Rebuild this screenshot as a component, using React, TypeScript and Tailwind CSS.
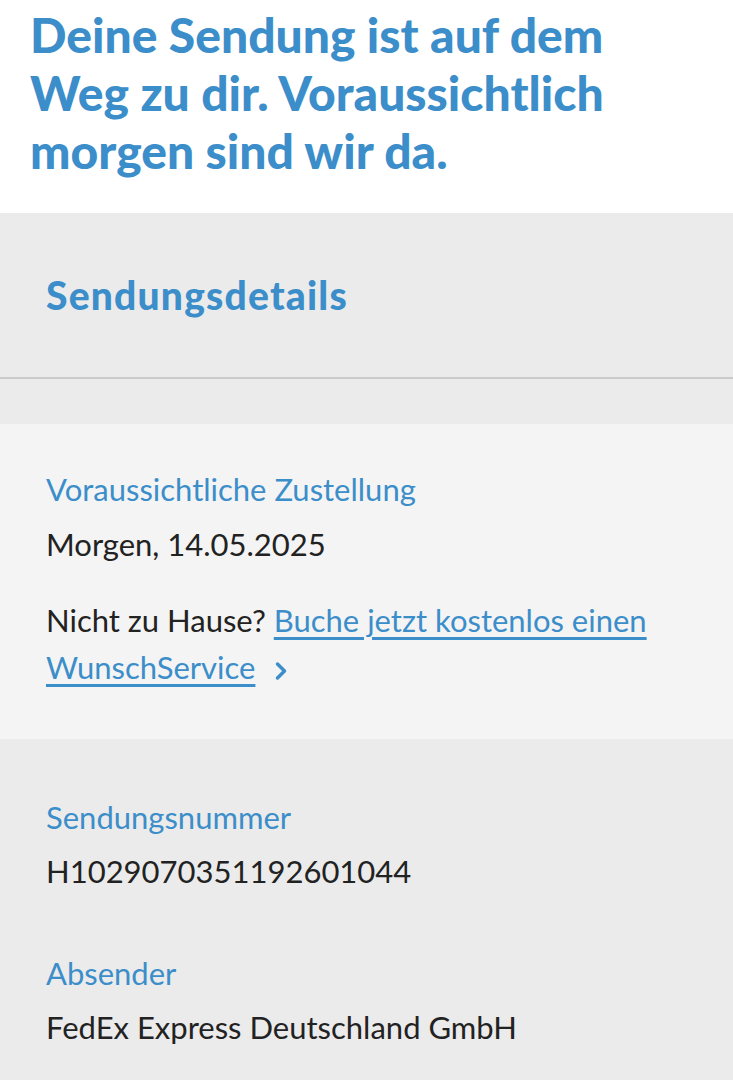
export default function App() {
  return (
    <div className="min-h-[1080px] w-full bg-[#ebebeb] font-['Lato','Liberation_Sans',sans-serif]">
      <div className="bg-white px-[30px] pt-[6px] pb-[33px]">
        <h1 className="text-[48px] font-black leading-[58px] tracking-[0px] text-[#3b8ec9]">
          Deine Sendung ist auf dem
          <br />
          Weg zu dir. Voraussichtlich
          <br />
          morgen sind wir da.
        </h1>
      </div>

      <div className="flex h-[166px] items-center border-b-2 border-[#cbcbcb] px-[46px]">
        <h2 className="text-[39px] font-black tracking-[1.2px] text-[#3b8ec9]">Sendungsdetails</h2>
      </div>

      <div className="h-[45px]" />

      <div className="bg-[#f4f4f4] px-[46px] pt-[45px] pb-[48px] text-[31px]">
        <p className="leading-[40px] text-[#3b8ec9]">Voraussichtliche Zustellung</p>
        <p className="mt-[15px] leading-[40px] text-[#222]">Morgen, 14.05.2025</p>
        <p className="mt-[33px] leading-[47px] text-[#222]">
          Nicht zu Hause?{" "}
          <a href="#" className="text-[#3b8ec9] underline decoration-[3px] underline-offset-[5px]">
            Buche jetzt kostenlos einen WunschService
          </a>
          <svg className="ml-[20px] inline-block align-[-2px]" width="12" height="20" viewBox="0 0 12 20" fill="none">
            <path d="M2.5 3l7 7-7 7" stroke="#3b8ec9" strokeWidth="3.5" strokeLinecap="round" strokeLinejoin="round" />
          </svg>
        </p>
      </div>

      <div className="px-[46px] pt-[58px] pb-[40px] text-[31px]">
        <p className="leading-[40px] text-[#3b8ec9]">Sendungsnummer</p>
        <p className="mt-[14px] leading-[40px] text-[#222]">H1029070351192601044</p>
        <p className="mt-[62px] leading-[40px] text-[#3b8ec9]">Absender</p>
        <p className="mt-[14px] leading-[40px] text-[#222]">FedEx Express Deutschland GmbH</p>
      </div>
    </div>
  );
}
